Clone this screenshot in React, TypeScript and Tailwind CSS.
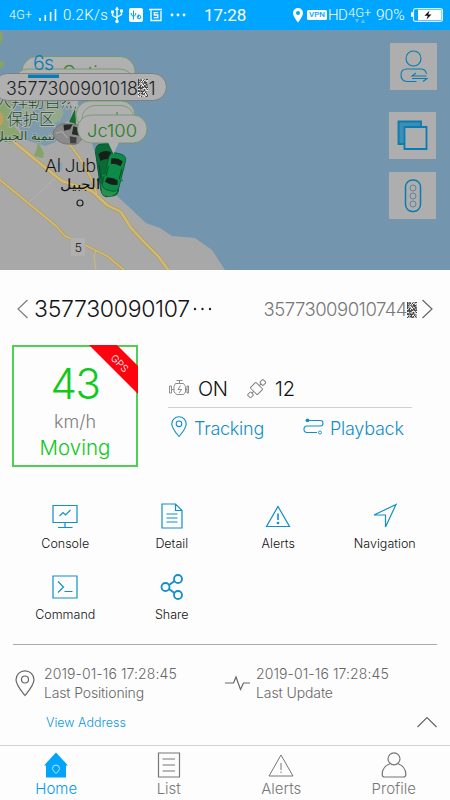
import type { ReactNode } from "react";
import clsx from "clsx";

const BLUE = "#00a5fa";

function Icon({
  w,
  h,
  sw = 1.2,
  color = "currentColor",
  children,
}: {
  w: number;
  h: number;
  sw?: number;
  color?: string;
  children: ReactNode;
}) {
  return (
    <svg width={w} height={h} viewBox={`0 0 ${w} ${h}`} fill="none" stroke={color} strokeWidth={sw} className="shrink-0">
      {children}
    </svg>
  );
}

// Grainy block that hides one digit of an IMEI.
function Grain({ x, y, w, h }: { x: number; y: number; w: number; h: number }) {
  const cells = [];
  for (let j = 0; j < h; j++) {
    for (let i = 0; i < w; i++) {
      const n = (i * 37 + j * 91 + i * j * 17 + ((i * i + j * 5) % 7) * 13) % 11;
      const fill = n < 3 ? "#444444" : n < 6 ? "#777777" : n < 9 ? "#b5b5b5" : "#ededed";
      cells.push(<rect key={`${i}-${j}`} x={x + i} y={y + j} width="1" height="1" fill={fill} />);
    }
  }
  return <g stroke="none">{cells}</g>;
}

function StatusBar() {
  return (
    <header className="flex h-[30px] items-center bg-[#00a5ff] pl-[9px] pr-[7px] font-[Roboto,sans-serif] text-white">
      <span className="w-[28px] text-[12.5px] tracking-[0.2px]">4G+</span>
      <Icon w={20} h={14} sw={1.6}>
        <path d="M3 13V10M8.3 13V7M13.6 13V4M18.5 13V1" />
      </Icon>
      <span className="ml-[6px] w-[48px] text-[15px] tracking-[0.3px]">0.2K/s</span>
      <Icon w={12} h={18} sw={1.4}>
        <path d="M6 16V2M1.5 6V9.5L6 12M10.5 5V8.5L6 11" />
        <path d="M3.8 4L6 .5L8.2 4ZM0 4.5H3V7.3H0ZM9 3.5H12V6.3H9Z" fill="currentColor" stroke="none" />
        <circle cx="6" cy="15.5" r="1.7" fill="currentColor" stroke="none" />
      </Icon>
      <span className="ml-[6px]">
        <Icon w={14} h={14} sw={1}>
          <rect width="14" height="14" rx="2" fill="#fff" stroke="none" />
          <path d="M4.5 11.5V2.5M2.3 5V7L4.5 8.5L6.7 7V5M9.5 6.5V9.5" stroke={BLUE} />
          <circle cx="10" cy="9" r="1.8" stroke={BLUE} />
        </Icon>
      </span>
      <span className="ml-[6px]">
        <Icon w={14} h={14} sw={1.3}>
          <path d="M0 1.5H13M2 1.5V12.5H12V3M9.2 4.6H5.3V7H8.8V9.6H4.8" />
        </Icon>
      </span>
      <span className="ml-[7px]">
        <Icon w={16} h={4}>
          <g fill="currentColor" stroke="none">
            <circle cx="2" cy="2" r="1.4" />
            <circle cx="8" cy="2" r="1.4" />
            <circle cx="14" cy="2" r="1.4" />
          </g>
        </Icon>
      </span>
      <span className="ml-[18px] pt-[2px] text-[17px] font-normal">17:28</span>
      <div className="ml-auto flex items-center">
        <Icon w={10} h={15}>
          <path
            d="M5 0A5 5 0 0 0 0 5C0 8.5 5 14.5 5 14.5S10 8.5 10 5A5 5 0 0 0 5 0ZM5 3A2 2 0 1 1 5 7A2 2 0 0 1 5 3Z"
            fill="#fff"
            fillRule="evenodd"
            stroke="none"
          />
        </Icon>
        <span className="ml-[4px] flex h-[10px] w-[20px] items-center justify-center rounded-[1.5px] bg-white text-[8px] font-medium text-[#00a5ff]">
          VPN
        </span>
        <span className="ml-[1px] w-[20px] text-[15px] tracking-[-0.7px]">HD</span>
        <span className="relative w-[28px] pb-[5px] text-[13px] leading-none">
          4G+
          <span className="absolute left-[7px] top-[13px]">
            <Icon w={11} h={4}>
              <path d="M0 0H4L2 4ZM6 4H10L8 0Z" fill="#5cc4ff" stroke="none" />
            </Icon>
          </span>
        </span>
        <span className="w-[35px] pt-[2px] text-[15.5px]">90%</span>
        <Icon w={32} h={14}>
          <rect x="2.5" y=".6" width="29" height="12.8" rx="2" stroke="#d5f0ff" />
          <rect x="0" y="4" width="2" height="5" rx="1" fill="#fff" stroke="none" />
          <rect x="7" y="1.8" width="23.5" height="10.4" fill="#fff" stroke="none" />
          <path d="M18.5 2.5L13.5 7.8H16.8L15.5 11.5L20.5 6.4H17.3Z" fill="#111" stroke="none" />
        </Icon>
      </div>
    </header>
  );
}

function Pill({ x, y, w, h, stroke = "#6c9a62" }: { x: number; y: number; w: number; h: number; stroke?: string }) {
  return <rect x={x} y={y} width={w} height={h} rx={h / 2} fill="#b0b0b0" stroke={stroke} strokeWidth=".8" />;
}

function GreenCar({ body }: { body: string }) {
  return (
    <g>
      <rect x="-8.5" y="-20" width="17" height="40" rx="5.5" fill={body} stroke="#07552a" strokeWidth=".8" />
      <path d="M-6-13Q0-16 6-13L5-7.5Q0-9-5-7.5Z" fill="#152019" />
      <path d="M-5.5 7.5Q0 5.5 5.5 7.5L6.5 12Q0 15-6.5 12Z" fill="#152019" />
      <path d="M-6.8-5V6M6.8-5V6" stroke="#0a4a24" />
      <path d="M-8 5L-10.5 7M8 5L10.5 7" stroke={body} strokeWidth="1.5" />
    </g>
  );
}

function MapScene() {
  return (
    <svg width="450" height="240" viewBox="0 30 450 240" className="block">
      <rect y="30" width="450" height="240" fill="#7495ae" />
      <path d="M0 98L40 94L78 104L88 128L98 165L117 196L130 208L146 223L160 228L172 236L195 238L212 250L225 270H0Z" fill="#a8a8a8" />
      <path d="M0 30Q5 34 2 42L0 44ZM0 61Q6 60 4 66L0 69Z" fill="#83a36b" />
      <path d="M0 100H10L17 110L13 125L22 136L10 144L0 140Z" fill="#8ba56f" />
      <path d="M0 112Q6 116 2 125H0Z" fill="#bf9f60" />
      <path d="M12 101H74L70 120L54 128L56 142L45 146L26 140L17 124Z" fill="#7d9bad" />
      <path d="M25 101L33 113L30 120L20 115ZM44 101L58 108L64 112L60 121L52 124L44 112Z" fill="#93a98a" />
      <path d="M38 142L44 153L43 158L34 156L37 148Z" fill="#83a36b" />
      <path d="M57 162L63 163L62 170L56 168Z" fill="#8ea3b2" />
      <path d="M28 203L60 174" stroke="#b3b3b3" fill="none" />

      <g fill="none" strokeLinejoin="round">
        <g stroke="#b39a55">
          <path d="M13 141L37 161L62 181L92 191L107 205L121 212L131 228L145 243L158 256L169 271" strokeWidth="3.8" />
          <path d="M68 142L79 157L91 178L97 194" strokeWidth="2.8" />
          <path d="M0 180L27 202L56 226L65 236L87 246L107 256L124 270" strokeWidth="3" />
        </g>
        <g stroke="#d0bb75">
          <path d="M13 141L37 161L62 181L92 191L107 205L121 212L131 228L145 243L158 256L169 271" strokeWidth="2.4" />
          <path d="M68 142L79 157L91 178L97 194" strokeWidth="1.6" />
          <path d="M0 180L27 202L56 226L65 236L87 246L107 256L124 270" strokeWidth="1.7" />
          <path d="M96 250L94 257L96 270" />
        </g>
      </g>

      <g fontFamily="'Noto Sans CJK SC', sans-serif" fontSize="16" fill="#164e23" stroke="#b4b4b4" strokeWidth="2" paintOrder="stroke">
        <text x="-5" y="107" textLength="82" lengthAdjust="spacingAndGlyphs">
          入拜勒自然
        </text>
        <text x="7" y="124.5" textLength="48">
          保护区
        </text>
      </g>
      <text
        x="55"
        y="140"
        textAnchor="end"
        direction="ltr"
        fontFamily="'DejaVu Sans', sans-serif"
        fontSize="11.5"
        fill="#164e23"
        stroke="#b4b4b4"
        strokeWidth="1.5"
        paintOrder="stroke"
      >
        تنمية الجبيل
      </text>

      <path d="M75 109L69 122L76 124Z" fill="#176d2d" />
      <g transform="translate(68 132) rotate(4)">
        <path d="M-15 3Q-14-5-6-8H8Q15-7 15 1T8 12H-3Q-12 10-15 3Z" fill="#8a8a8a" stroke="#6a6a6a" strokeWidth=".7" />
        <path d="M-5-7L4-8L2-3L-4-1ZM5-6L10-5L12 3L4 2Z" fill="#292929" />
        <path d="M2 4L9 5L9 11L3 11Z" fill="#404040" />
        <path d="M-12 2L-6 0L0 6" stroke="#aaaaaa" fill="none" />
      </g>

      <g transform="translate(107 170) rotate(-8) scale(1.05 1.32)">
        <GreenCar body="#0b6b38" />
      </g>
      <path d="M101 184L118 182L117 192Q110 200 102 194Z" fill="#2b8f52" />
      <g transform="translate(114 172) rotate(14) scale(1 .95)">
        <GreenCar body="#0c8a47" />
      </g>

      <g fontFamily="Roboto, sans-serif" fill="#111">
        <text x="45" y="171.5" fontSize="19" fontWeight="300" textLength="51">
          Al Jub
        </text>
        <text x="100" y="189" textAnchor="end" fontFamily="'DejaVu Sans', sans-serif" fontSize="14" textLength="40" lengthAdjust="spacingAndGlyphs">
          الجبيل
        </text>
        <circle cx="80" cy="203" r="3" fill="none" stroke="#222" strokeWidth="1.2" />
        <rect x="71" y="238" width="14" height="18" rx="1" fill="#b0b0b0" />
        <text x="74.5" y="251.5" fontSize="13" fontWeight="300">
          5
        </text>
      </g>

      <Pill x={22} y={56.5} w={113} h={30} />
      <text x="62" y="79" fontFamily="Inter, sans-serif" fontSize="18" fontWeight="300" fill="#35822c" textLength="58" lengthAdjust="spacingAndGlyphs">
        Option
      </text>
      <Pill x={14} y={69} w={120} h={28} />
      <path d="M68 99L74 108L80 99" fill="#b0b0b0" />
      <Pill x={-6} y={73.5} w={172.5} h={27} stroke="#777777" />
      <text x="6" y="94.5" fontFamily="Inter, sans-serif" fontSize="18" fontWeight="300" fill="#222" textLength="132" lengthAdjust="spacingAndGlyphs">
        3577300901018
      </text>
      <Grain x={138} y={79} w={10} h={18} />
      <text x="148.5" y="94.5" fontFamily="Inter, sans-serif" fontSize="18" fontWeight="300" fill="#222">
        1
      </text>
      <text x="33" y="69.5" fontFamily="Inter, sans-serif" fontSize="19.5" fill="#087cb3" textLength="21">
        6s
      </text>
      <rect x="28" y="74.5" width="31" height="3.5" fill="#087cb3" />

      <Pill x={76} y={101} w={59} h={28} />
      <Pill x={82} y={105.5} w={52} h={26} />
      <path d="M117 112V116" stroke="#35822c" />
      <Pill x={77.5} y={115} w={69.5} h={28} />
      <path d="M108 142.3L113.5 154L119 142.3Z" fill="#b0b0b0" />
      <text x="87" y="136.5" fontFamily="Inter, sans-serif" fontSize="17.5" fontWeight="300" fill="#287e20" textLength="50" lengthAdjust="spacingAndGlyphs">
        Jc100
      </text>
    </svg>
  );
}

function MapButton({ children }: { children: ReactNode }) {
  return <button className="flex h-[47px] w-[47px] items-center justify-center bg-[#aeaeae] text-[#087cb3]">{children}</button>;
}

function MapArea() {
  return (
    <section className="relative h-[240px] overflow-hidden">
      <MapScene />
      <div className="absolute right-[13px] top-[13px]">
        <MapButton>
          <Icon w={28} h={33} sw={1.1}>
            <circle cx="13.5" cy="8.5" r="7.5" />
            <path d="M26.5 24C26 20.5 24 19 20.5 19H7Q1 19 1 25T7 31.5H16.5M26.5 26H12L16 23M12 28.5H27L23 31.5" />
          </Icon>
        </MapButton>
      </div>
      <div className="absolute right-[14px] top-[82px]">
        <MapButton>
          <Icon w={31} h={31} sw={1.8}>
            <path d="M1.5 1.5H24V24H1.5Z" fill="#3d8db5" />
            <path d="M7.5 7H29.5V29H7.5Z" fill="#aeaeae" />
          </Icon>
        </MapButton>
      </div>
      <div className="absolute right-[14px] top-[142px]">
        <MapButton>
          <Icon w={18} h={34} sw={1.5}>
            <rect x="1.5" y="1" width="15" height="31.5" rx="7" />
            <g stroke="#577f93" strokeWidth=".9">
              <circle cx="9" cy="9" r="3" />
              <circle cx="9" cy="17" r="3" />
              <circle cx="9" cy="25" r="3" />
            </g>
          </Icon>
        </MapButton>
      </div>
    </section>
  );
}

function DeviceHeader() {
  return (
    <div className="flex h-[75px] items-center pl-[17px] pr-[17px] pt-[3px]">
      <Icon w={12} h={20} sw={1.1} color="#777">
        <path d="M10.5 1L1 10L10.5 19" />
      </Icon>
      <span className="ml-[5px] pt-px text-[23px] tracking-[-0.3px] text-[#151515]">357730090107</span>
      <span className="ml-[3px]">
        <Icon w={20} h={4}>
          <g fill="#222" stroke="none">
            <circle cx="2" cy="2" r="1.2" />
            <circle cx="9.5" cy="2" r="1.2" />
            <circle cx="17" cy="2" r="1.2" />
          </g>
        </Icon>
      </span>
      <div className="ml-auto flex items-center">
        <span className="pt-px text-[18.5px] tracking-[-0.5px] text-[#777]">35773009010744</span>
        <Icon w={10} h={17}>
          <Grain x={0} y={1} w={10} h={16} />
        </Icon>
        <span className="ml-[4px]">
          <Icon w={12} h={20} sw={1.2} color="#666">
            <path d="M1.5 1L11 10L1.5 19" />
          </Icon>
        </span>
      </div>
    </div>
  );
}

function SpeedCard() {
  return (
    <div className="relative h-[122px] w-[126px] border-2 border-[#4fd055] text-center text-[#0fc91b]">
      <div className="pt-[12px] text-[42px] leading-[50px] tracking-[-1.5px]">43</div>
      <div className="text-[18px] leading-[26px] text-[#808080]">km/h</div>
      <div className="text-[20.5px] leading-[26px]">Moving</div>
      <div className="absolute -right-[2px] -top-[2px]">
        <Icon w={50} h={50}>
          <path d="M1 0H29L50 21V49Z" fill="#fb0410" stroke="none" />
          <text x="32" y="22" transform="rotate(45 32 18)" textAnchor="middle" fontSize="10" fill="#fff" stroke="none">
            GPS
          </text>
        </Icon>
      </div>
    </div>
  );
}

function Summary() {
  return (
    <div className="flex pl-[12px]">
      <SpeedCard />
      <div className="ml-[30px] w-[244px] pt-[29px]">
        <div className="flex h-[34px] items-center border-b border-[#cfcfcf] pb-[4px] text-[20px] text-[#111]">
          <span className="pb-px">
            <Icon w={22} h={18} sw={0.9} color="#808080">
              <path d="M8.5 1.5H14.5M11.5 1.5V4.5M7.5 4.5H15.5L17.5 7.5V13L15.5 15.5H9L6 13V7.5ZM6 10.5H4M1.5 7V14H3.5V7ZM17.5 10.5H19M19 7V14H20.5V7Z" />
              <path d="M12.5 6.5L10 10.5H13.5L11 14" />
            </Icon>
          </span>
          <span className="ml-[8px] w-[41px] tracking-[-0.5px]">ON</span>
          <span className="ml-[7px] pb-px">
            <Icon w={21} h={21} sw={1} color="#808080">
              <g transform="rotate(-45 10.5 10.5)">
                <rect x="6.5" y="5.5" width="8" height="10" rx="1" />
                <rect x="-.5" y="8.5" width="4.5" height="4.5" rx=".8" />
                <rect x="17" y="8.5" width="4.5" height="4.5" rx=".8" />
                <path d="M4 10.5H6.500M14.5 10.5H17" />
              </g>
            </Icon>
          </span>
          <span className="ml-[8px]">12</span>
        </div>
        <div className="flex h-[40px] items-center pl-[2px] text-[18px] tracking-[-0.25px] text-[#128fc8]">
          <span className="pb-[2px]">
            <Icon w={18} h={22} sw={1.1}>
              <path d="M9 20.5C5.5 16.5 1.8 12 1.8 8A7.2 7.2 0 0 1 16.2 8C16.2 12 12.5 16.5 9 20.5Z" />
              <circle cx="9" cy="7.8" r="2.8" />
            </Icon>
          </span>
          <span className="ml-[6px] w-[109px]">Tracking</span>
          <span className="pb-[3px]">
            <Icon w={21} h={17} sw={1.1}>
              <path d="M4 2.5H17.5Q20 2.5 20 5.2T17.5 8H4Q1 8 1 11.2T4 14.5H14" />
              <circle cx="4.5" cy="2.3" r="1.9" fill="currentColor" stroke="none" />
              <circle cx="17" cy="14.5" r="1.5" strokeWidth=".9" />
            </Icon>
          </span>
          <span className="ml-[6px]">Playback</span>
        </div>
      </div>
    </div>
  );
}

const actions: { label: string; icon: ReactNode }[] = [
  {
    label: "Console",
    icon: (
      <Icon w={26} h={26}>
        <path d="M1 2.5H25V19.5H1ZM13 19.5V24.5M6 24.5H20.5" />
        <path d="M7.5 13L11 9.5L13.5 12L18.5 7" />
      </Icon>
    ),
  },
  {
    label: "Detail",
    icon: (
      <Icon w={22} h={26}>
        <path d="M1 1H14.5L21 7.5V25H1ZM14.5 1V7.5H21M5.5 11H16.5M5.5 15H16.5M5.5 19H16.5" />
      </Icon>
    ),
  },
  {
    label: "Alerts",
    icon: (
      <Icon w={26} h={26}>
        <path d="M13 3.5L24.5 23.5H1.5Z" />
        <path d="M13 10.5V17" strokeWidth="1.6" />
        <circle cx="13" cy="20" r="1.3" fill="currentColor" stroke="none" />
      </Icon>
    ),
  },
  {
    label: "Navigation",
    icon: (
      <Icon w={26} h={26}>
        <path d="M24 1.5L2 12H13.5V24Z" />
      </Icon>
    ),
  },
  {
    label: "Command",
    icon: (
      <Icon w={26} h={26}>
        <path d="M1 2H25V24H1Z" />
        <path d="M6 7.5L11.5 13L6 18.5M12.5 17.5H20.5" />
      </Icon>
    ),
  },
  {
    label: "Share",
    icon: (
      <Icon w={24} h={26} sw={1.8}>
        <circle cx="5.5" cy="13" r="4" />
        <circle cx="18" cy="5" r="4" />
        <circle cx="18" cy="21" r="4" />
        <path d="M9 11L14.5 7M9 15L14.5 19" />
      </Icon>
    ),
  },
];

function ActionGrid() {
  return (
    <div className="grid grid-cols-4 px-[12px] pt-[36px]">
      {actions.map((a) => (
        <button key={a.label} className="flex h-[71px] flex-col items-center text-[#128fc8]">
          {a.icon}
          <span className="mt-[5px] text-[12.5px] leading-[20px] text-[#111]">{a.label}</span>
        </button>
      ))}
    </div>
  );
}

function LastInfo() {
  return (
    <div className="mx-[13px] h-[101px] border-t border-[#aaa] text-[#666]">
      <div className="flex pt-[19px] text-[14px] leading-[19px]">
        <div className="flex w-[211px] items-center">
          <Icon w={22} h={27} sw={1.2}>
            <path d="M12 25.5C8 20.5 3 15 3 9.8A9 9 0 0 1 21 9.8C21 15 16 20.5 12 25.5Z" />
            <circle cx="12" cy="9.5" r="3.5" />
          </Icon>
          <div className="ml-[9px]">
            <div className="tracking-[0.1px]">2019-01-16 17:28:45</div>
            <div className="tracking-[-0.15px]">Last Positioning</div>
          </div>
        </div>
        <div className="flex items-center">
          <Icon w={27} h={18}>
            <path d="M1 9H9.5L12 3L16.5 15.5L19.5 9H26" />
          </Icon>
          <div className="ml-[5px]">
            <div className="tracking-[0.1px]">2019-01-16 17:28:45</div>
            <div className="tracking-[-0.1px]">Last Update</div>
          </div>
        </div>
      </div>
      <div className="flex items-center justify-between pl-[33px] pt-[10px]">
        <span className="text-[12.5px] leading-[22px] text-[#0d9add]">View Address</span>
        <span className="pb-[3px]">
          <Icon w={20} h={12}>
            <path d="M.5 11L10 1.5L19.5 11" />
          </Icon>
        </span>
      </div>
    </div>
  );
}

const tabs: { label: string; icon: ReactNode }[] = [
  {
    label: "Home",
    icon: (
      <Icon w={26} h={26}>
        <path d="M13 .5L25 13.5H23V25.5H3V13.5H1Z" fill={BLUE} stroke="none" />
        <path d="M13 21.5C11 19.5 9.5 18 9.5 16.5A3.5 3.5 0 0 1 16.5 16.5C16.5 18 15 19.5 13 21.5Z" stroke="#d8f1ff" strokeWidth=".9" />
      </Icon>
    ),
  },
  {
    label: "List",
    icon: (
      <Icon w={24} h={26}>
        <path d="M1.5 1H22.5V25H1.5ZM5.5 7H18M5.5 13H18M5.5 19H18" />
      </Icon>
    ),
  },
  {
    label: "Alerts",
    icon: (
      <Icon w={26} h={26} sw={1}>
        <path d="M13 3L25 24H1ZM13 11V18M13 19.5V21" />
      </Icon>
    ),
  },
  {
    label: "Profile",
    icon: (
      <Icon w={26} h={26}>
        <circle cx="13" cy="6.8" r="6" />
        <path d="M9 11.8C4 13.5 1.2 17.5 1.2 22.5Q1.2 25 3.5 25H22.5Q24.8 25 24.8 22.5C24.8 17.5 22 13.5 17 11.8" />
      </Icon>
    ),
  },
];

function TabBar() {
  return (
    <nav className="grid h-[55px] grid-cols-4 border-t border-[#d2d2d2] pt-[6px]">
      {tabs.map((t, i) => (
        <button key={t.label} className={clsx("flex flex-col items-center", i === 0 ? "text-[#009cf0]" : "text-[#777]")}>
          {t.icon}
          <span className="text-[15px] leading-[22px]">{t.label}</span>
        </button>
      ))}
    </nav>
  );
}

export default function App() {
  return (
    <div className="flex h-[800px] w-[450px] flex-col overflow-hidden bg-[#fdfdfd] font-[Inter,sans-serif] font-light">
      <StatusBar />
      <MapArea />
      <main className="h-[475px]">
        <DeviceHeader />
        <Summary />
        <div className="h-[177px]">
          <ActionGrid />
        </div>
        <LastInfo />
      </main>
      <TabBar />
    </div>
  );
}
